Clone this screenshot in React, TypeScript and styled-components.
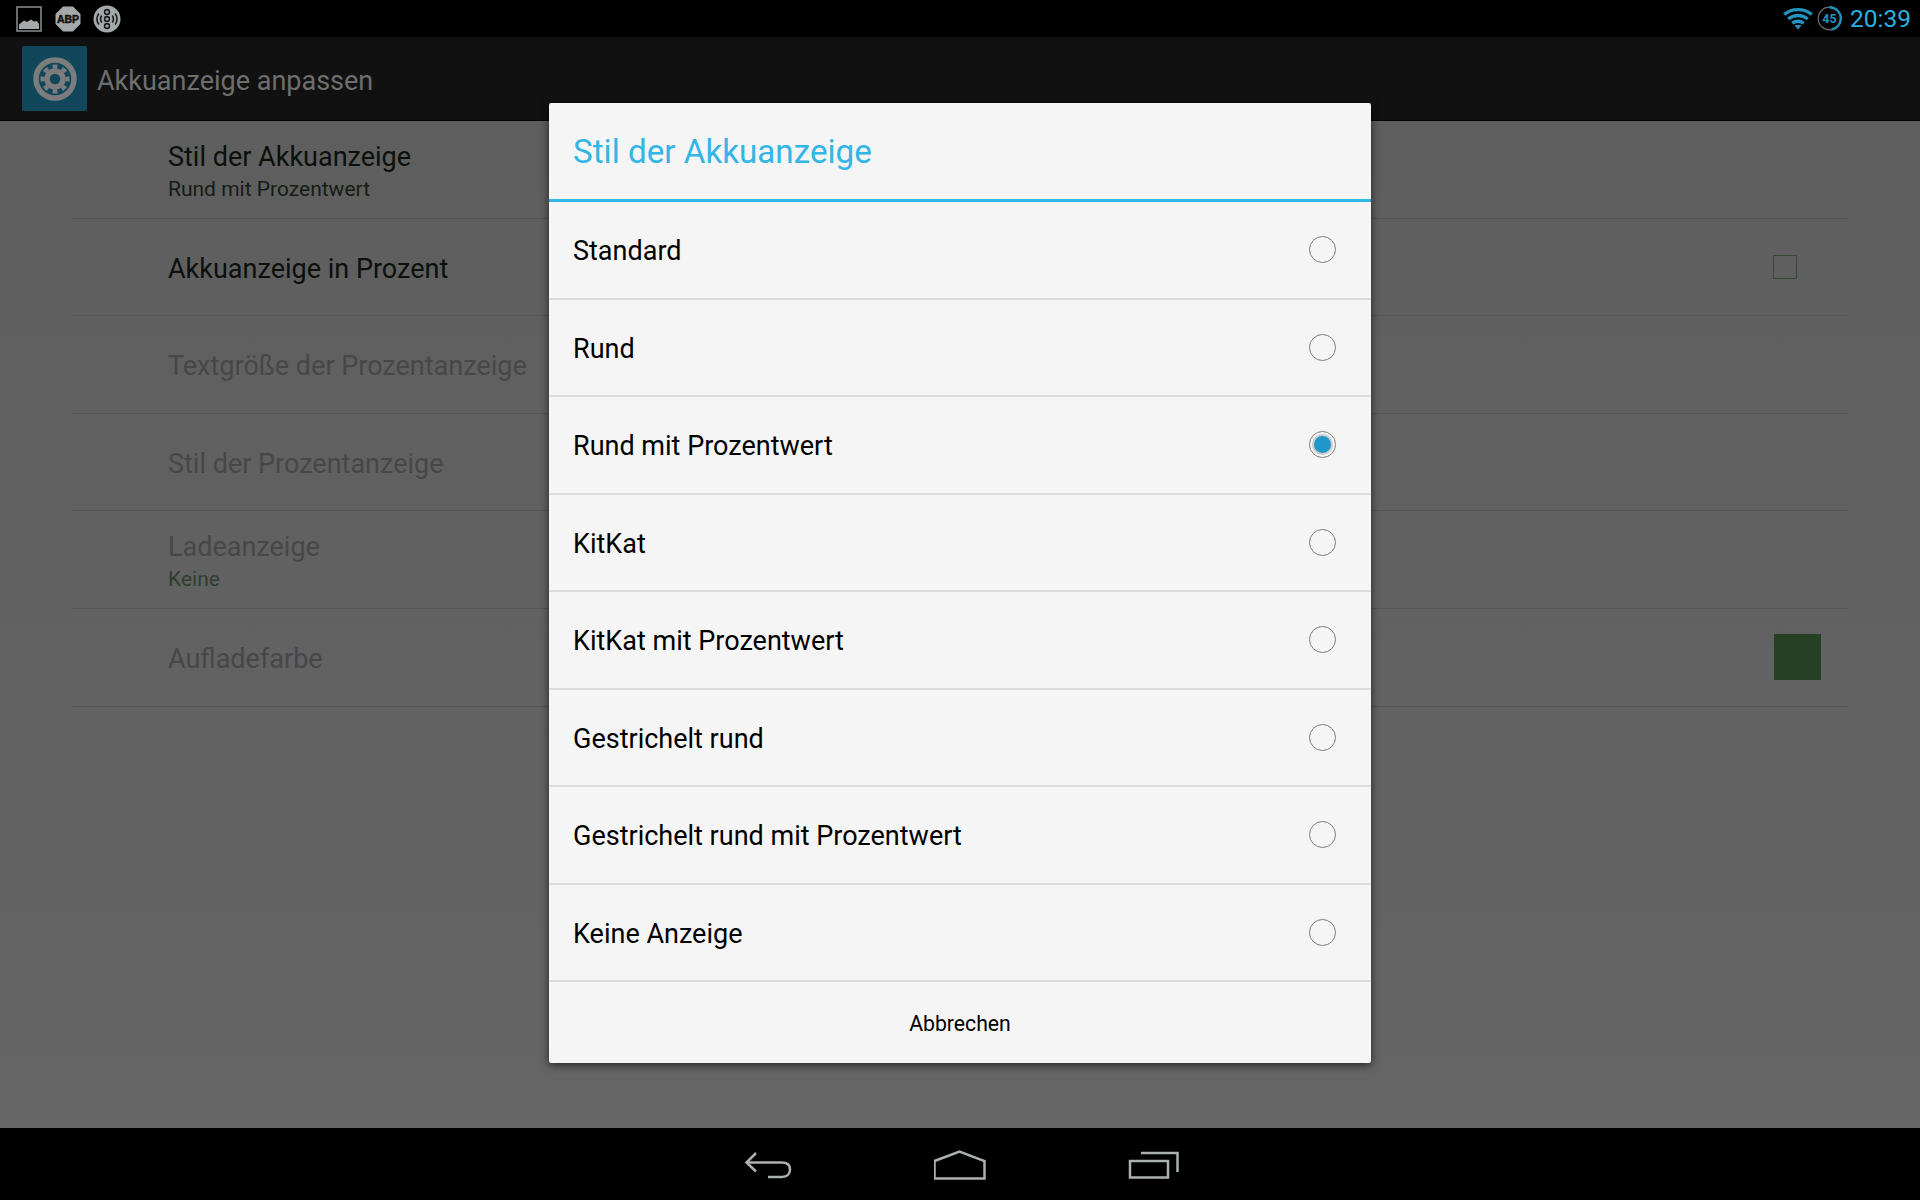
import React from "react";
import styled, {createGlobalStyle} from "styled-components";

const GlobalStyle = createGlobalStyle`
	html, body {
		margin: 0;
		padding: 0;
		background: #000;
	}
	* {
		box-sizing: border-box;
	}
`;

const options = [
	"Standard",
	"Rund",
	"Rund mit Prozentwert",
	"KitKat",
	"KitKat mit Prozentwert",
	"Gestrichelt rund",
	"Gestrichelt rund mit Prozentwert",
	"Keine Anzeige",
];

const ImageIcon = () => (
	<svg width="26" height="26" viewBox="0 0 26 26">
		<rect x="1" y="1" width="24" height="24" fill="#000" stroke="#8c9090" strokeWidth="1.5" />
		<path d="M3 23V18.5L8 14.5L11 16L15 13.5L18 15.5L21 15L23 18V23Z" fill="#a4a9a9" />
	</svg>
);

const AbpIcon = () => (
	<svg width="26" height="26" viewBox="0 0 26 26">
		<path d="M8 0.5H18L25.5 8V18L18 25.5H8L0.5 18V8Z" fill="#a4a9a9" />
		<text
			x="13"
			y="17"
			textAnchor="middle"
			fontFamily="Liberation Sans"
			fontWeight="700"
			fontSize="10.5"
			fill="#111"
			stroke="#111"
			strokeWidth="0.5"
		>
			ABP
		</text>
	</svg>
);

const BeamIcon = () => (
	<svg width="28" height="28" viewBox="0 0 28 28" fill="none">
		<circle cx="14" cy="14" r="13.5" fill="#a4a9a9" />
		<g stroke="#1c1c1c" strokeWidth="1.6">
			<circle cx="14" cy="7" r="2.4" />
			<circle cx="14" cy="14" r="2.4" />
			<circle cx="14" cy="21" r="2.4" />
			<path d="M8.8 10.5a6 6 0 0 0 0 7M19.2 10.5a6 6 0 0 1 0 7" />
			<path d="M5.8 8.5a10 10 0 0 0 0 11M22.2 8.5a10 10 0 0 1 0 11" />
		</g>
	</svg>
);

const WifiIcon = () => (
	<svg width="30" height="23" viewBox="0 0 30 23" fill="none" stroke="#2392bd" strokeWidth="3.4">
		<path d="M1.2 7.5C9 1 21 1 28.8 7.5" />
		<path d="M5.2 12C11 7.4 19 7.4 24.8 12" />
		<path d="M9.2 16.2C13 13.5 17 13.5 20.8 16.2" />
		<path d="M11.5 18H18.5L15 22.8Z" fill="#2392bd" stroke="none" />
	</svg>
);

const BatteryIcon = () => (
	<svg width="25" height="25" viewBox="0 0 25 25" fill="none">
		<circle cx="12.5" cy="12.5" r="11.3" stroke="#6e6e6e" strokeWidth="1.2" />
		<circle
			cx="12.5"
			cy="12.5"
			r="11.3"
			stroke="#2392bd"
			strokeWidth="2.4"
			pathLength="100"
			strokeDasharray="47 100"
			transform="rotate(-90 12.5 12.5)"
		/>
		<text x="12.5" y="17" textAnchor="middle" fontFamily="Roboto" fontWeight="700" fontSize="12.5" fill="#2392bd">
			45
		</text>
	</svg>
);

const SettingsGlyph = () => (
	<svg width="46" height="46" viewBox="0 0 46 46" fill="none" stroke="#7c7c7c">
		<circle cx="23" cy="23" r="19" strokeWidth="5.5" />
		<circle cx="23" cy="23" r="8" strokeWidth="5.5" />
		<circle cx="23" cy="23" r="12.5" strokeWidth="4" pathLength="16" strokeDasharray="1 1" strokeDashoffset="0.5" />
	</svg>
);

const BackIcon = () => (
	<svg width="54" height="28" viewBox="-4 0 54 28" fill="none" stroke="#a9b1b1" strokeWidth="2.5">
		<path d="M12 2L2.5 11.5L12 20.5" />
		<path d="M3 11.5H38C43.5 11.5 46 14.5 46 18.5C46 23 43 26 38 26H24" />
	</svg>
);

const HomeIcon = () => (
	<svg width="54" height="30" viewBox="1.5 0 54 30" fill="none" stroke="#a9b1b1" strokeWidth="2.5">
		<path d="M2 28.5V11L27 1.5L52 11V28.5Z" />
	</svg>
);

const RecentIcon = () => (
	<svg width="52" height="28" viewBox="0 0 52 28" fill="none" stroke="#a9b1b1" strokeWidth="2.5">
		<rect x="2" y="10" width="38" height="16.5" />
		<path d="M13 2H49.5V21" />
	</svg>
);

export default function App() {
	return (
		<Screen>
			<GlobalStyle />
			<StatusBar>
				<StatusGroup>
					<ImageIcon />
					<AbpIcon />
					<BeamIcon />
				</StatusGroup>
				<StatusRight>
					<WifiIcon />
					<BatteryIcon />
					<Clock>20:39</Clock>
				</StatusRight>
			</StatusBar>
			<ActionBar>
				<AppIcon>
					<SettingsGlyph />
				</AppIcon>
				<ActionTitle>Akkuanzeige anpassen</ActionTitle>
			</ActionBar>
			<Content>
				<PrefRow>
					<div>
						<PrefTitle>Stil der Akkuanzeige</PrefTitle>
						<PrefSummary>Rund mit Prozentwert</PrefSummary>
					</div>
				</PrefRow>
				<PrefRow>
					<PrefTitle>Akkuanzeige in Prozent</PrefTitle>
					<CheckBox />
				</PrefRow>
				<PrefRow>
					<PrefTitle $disabled>Textgröße der Prozentanzeige</PrefTitle>
				</PrefRow>
				<PrefRow>
					<PrefTitle $disabled>Stil der Prozentanzeige</PrefTitle>
				</PrefRow>
				<PrefRow>
					<div>
						<PrefTitle $disabled>Ladeanzeige</PrefTitle>
						<PrefSummary $disabled>Keine</PrefSummary>
					</div>
				</PrefRow>
				<PrefRow>
					<PrefTitle $disabled>Aufladefarbe</PrefTitle>
					<Swatch />
				</PrefRow>
			</Content>
			<NavBar>
				<BackIcon />
				<HomeIcon />
				<RecentIcon />
			</NavBar>
			<Dialog>
				<DialogTitle>Stil der Akkuanzeige</DialogTitle>
				{options.map((option) => (
					<OptionRow key={option}>
						<OptionLabel>{option}</OptionLabel>
						<Radio $checked={option === "Rund mit Prozentwert"} />
					</OptionRow>
				))}
				<CancelButton>Abbrechen</CancelButton>
			</Dialog>
		</Screen>
	);
}

const Screen = styled.div`
	position: relative;
	width: 1920px;
	height: 1200px;
	display: flex;
	flex-direction: column;
	overflow: hidden;
	font-family: Roboto, "Noto Sans", sans-serif;
`;

const StatusBar = styled.div`
	height: 37px;
	background: #000;
	display: flex;
	align-items: center;
	justify-content: space-between;
	padding: 0 9px 0 16px;
`;

const StatusGroup = styled.div`
	display: flex;
	align-items: center;
	gap: 12.5px;
`;

const StatusRight = styled.div`
	display: flex;
	align-items: center;
	gap: 3.5px;
`;

const Clock = styled.span`
	margin-left: 4.5px;
	font-size: 24.5px;
	font-weight: 400;
	color: #2cb0e0;
`;

const ActionBar = styled.div`
	height: 84px;
	background: #111;
	border-bottom: 1px solid #050505;
	display: flex;
	align-items: center;
	padding-left: 22px;
	gap: 10px;
`;

const AppIcon = styled.div`
	width: 65px;
	height: 65px;
	border-radius: 2px;
	background: #10475a;
	display: flex;
	align-items: center;
	justify-content: center;
`;

const ActionTitle = styled.span`
	padding-top: 5px;
	font-size: 27px;
	color: #6e6e6e;
`;

const Content = styled.div`
	flex: 1;
	background: linear-gradient(#5e5e5e, #656565);
	padding: 0 72px;
`;

const PrefRow = styled.div`
	height: 97.6px;
	padding: 4.5px 0 0 96px;
	border-bottom: 1.5px solid #555;
	display: flex;
	align-items: center;
	justify-content: space-between;
`;

const PrefTitle = styled.div<{$disabled?: boolean}>`
	font-size: 27px;
	line-height: 33px;
	color: ${(p) => (p.$disabled ? "#474747" : "#0b100b")};
`;

const PrefSummary = styled.div<{$disabled?: boolean}>`
	margin-top: 1px;
	font-size: 21px;
	line-height: 28px;
	color: ${(p) => (p.$disabled ? "#2e3f30" : "#141c14")};
`;

const CheckBox = styled.div`
	width: 24px;
	height: 24px;
	margin: -4.5px 51px 0 0;
	border: 1.5px solid #344a34;
`;

const Swatch = styled.div`
	width: 47px;
	height: 46px;
	margin: -4.5px 27px 0 0;
	background: #254024;
`;

const NavBar = styled.div`
	height: 72px;
	padding-top: 2px;
	background: #000;
	display: flex;
	align-items: center;
	justify-content: center;
	gap: 140px;
`;

const Dialog = styled.div`
	position: absolute;
	top: 103px;
	left: 549px;
	width: 822px;
	height: 960px;
	background: #f5f5f5;
	border-radius: 2px;
	box-shadow: 0 2px 9px rgba(0, 0, 0, 0.65);
	display: flex;
	flex-direction: column;
`;

const DialogTitle = styled.div`
	height: 99px;
	padding: 1px 0 0 24px;
	border-bottom: 3px solid #33b5e5;
	display: flex;
	align-items: center;
	font-size: 33.2px;
	color: #33b5e5;
`;

const OptionRow = styled.div`
	height: 97.5px;
	padding: 0 35px 0 24px;
	border-bottom: 2px solid #dcdcdc;
	display: flex;
	align-items: center;
	justify-content: space-between;
	font-size: 27px;
	color: #000;
`;

const OptionLabel = styled.span`
	padding-top: 3px;
`;

const Radio = styled.span<{$checked?: boolean}>`
	position: relative;
	width: 27px;
	height: 27px;
	border-radius: 50%;
	border: 1.5px solid #7b7b7b;
	display: block;

	&::after {
		content: "";
		display: ${(p) => (p.$checked ? "block" : "none")};
		position: absolute;
		inset: 2px;
		border-radius: 50%;
		background: #2196c9;
		border: 2px solid #c8cdd0;
	}
`;

const CancelButton = styled.div`
	flex: 1;
	padding-top: 1px;
	display: flex;
	align-items: center;
	justify-content: center;
	font-size: 21.2px;
	color: #000;
`;
